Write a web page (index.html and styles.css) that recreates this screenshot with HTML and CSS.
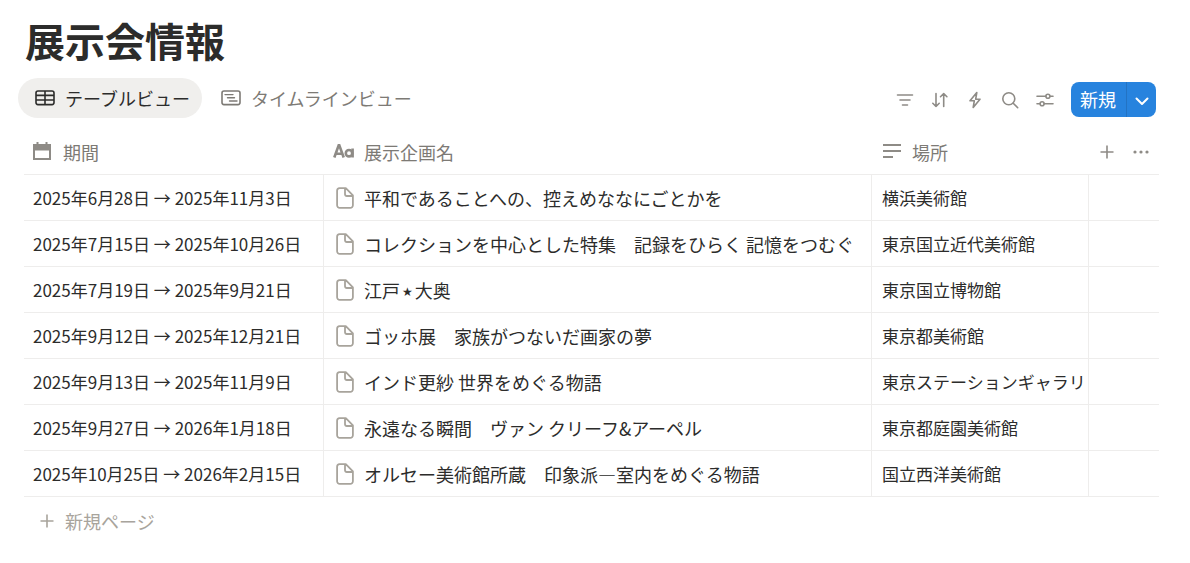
FILE: index.html
```html
<!DOCTYPE html>
<html lang="ja">
<head>
<meta charset="utf-8">
<meta name="viewport" content="width=device-width, initial-scale=1">
<title>展示会情報</title>
<link rel="stylesheet" href="styles.css">
</head>
<body>
<svg width="0" height="0" class="sprite" aria-hidden="true">
  <symbol id="page" viewBox="0 0 18 22">
    <path d="M3.6 1.1h6.2L16.9 8.4v9.8a2.6 2.6 0 0 1-2.6 2.6H3.7a2.6 2.6 0 0 1-2.6-2.6V3.7a2.6 2.6 0 0 1 2.5-2.6zM9 1.2v6.1a1.7 1.7 0 0 0 1.700 1.700h6" fill="none" stroke="currentColor" stroke-width="1.8" stroke-linejoin="round"/>
  </symbol>
  <symbol id="plus" viewBox="0 0 14 14">
    <path d="M7 .5v13M.5 7h13" fill="none" stroke="currentColor" stroke-width="1.6"/>
  </symbol>
</svg>
<main class="page">
  <h1 class="title">展示会情報</h1>

  <div class="bar">
    <nav class="tabs">
      <button class="tab tab-active" type="button">
        <svg width="20" height="16" viewBox="0 0 20 16" fill="none" stroke="currentColor" stroke-width="1.6"><rect x="1" y="1" width="18" height="13.6" rx="2"/><path d="M1 5.4h18M1 10h18M10 1v13.6"/></svg>
        <span>テーブルビュー</span>
      </button>
      <button class="tab" type="button">
        <svg width="20" height="16" viewBox="0 0 20 16" fill="none" stroke="currentColor" stroke-width="1.6"><rect x="1" y="1" width="18" height="13.6" rx="2"/><path d="M4 4.6h8M6.500 7.800h7M8.500 11h7.500" stroke-width="1.4" stroke-linecap="round"/></svg>
        <span>タイムラインビュー</span>
      </button>
    </nav>
    <div class="tools">
      <button class="tool" type="button" aria-label="フィルター"><svg width="18" height="18" viewBox="0 0 18 18"><path d="M1.500 4h15M4 9h10M6.500 14h5"/></svg></button>
      <button class="tool" type="button" aria-label="並べ替え"><svg width="18" height="18" viewBox="0 0 18 18"><path d="M5 2.500v13M1.800 12.300 5 15.500l3.200-3.200M12.700 15.500v-13M9.500 5.700l3.200-3.200 3.200 3.200"/></svg></button>
      <button class="tool" type="button" aria-label="オートメーション"><svg width="18" height="18" viewBox="0 0 18 18"><path d="M10.800 1.500 4 9.800h4.300L7.200 16.500 14 8.200H9.700z"/></svg></button>
      <button class="tool" type="button" aria-label="検索"><svg width="18" height="18" viewBox="0 0 18 18"><circle cx="7.800" cy="7.800" r="6"/><path d="m12.200 12.200 4.500 4.500"/></svg></button>
      <button class="tool" type="button" aria-label="設定"><svg width="18" height="18" viewBox="0 0 18 18"><path d="M1 5.200h8.800M14 5.200h3M1 12.800h3M8.200 12.800H17"/><circle cx="11.900" cy="5.200" r="2"/><circle cx="6.100" cy="12.800" r="2"/></svg></button>
      <div class="new">
        <button class="new-main" type="button">新規</button>
        <button class="new-more" type="button" aria-label="その他"><svg width="14" height="9" viewBox="0 0 14 9" fill="none" stroke="currentColor" stroke-width="2" stroke-linecap="round" stroke-linejoin="round"><path d="m1.500 1.500 5.500 5.500 5.500-5.500"/></svg></button>
      </div>
    </div>
  </div>

  <table class="table">
    <thead>
      <tr>
        <th class="col-date" scope="col"><span class="head"><svg width="20" height="18" viewBox="0 0 20 18"><path fill="currentColor" fill-rule="evenodd" d="M3.500 0h2v2h7V0h2v2H18v16H0V2h3.500zM2 8.500v7.500h14V8.500z"/></svg>期間</span></th>
        <th class="col-name" scope="col"><span class="head"><svg width="21" height="16" viewBox="0 0 21 16" fill="none" stroke="currentColor" stroke-width="2.600"><path d="M1.300 14.500 5.700 2.200h.6l4.400 12.300M2.900 10.800h6.200"/><circle cx="16" cy="10.200" r="3.200"/><path d="M19.600 5.500v9"/></svg>展示企画名</span></th>
        <th class="col-place" scope="col"><span class="head"><svg width="20" height="16" viewBox="0 0 20 16"><path d="M1 2h18M1 8h18M1 14h10" fill="none" stroke="currentColor" stroke-width="2"/></svg>場所</span></th>
        <th class="col-more"><span class="actions"><button type="button" aria-label="プロパティを追加"><svg width="14" height="14"><use href="#plus"/></svg></button><button type="button" aria-label="プロパティ"><svg width="16" height="4" viewBox="0 0 16 4" fill="currentColor"><circle cx="2" cy="2" r="1.600"/><circle cx="8" cy="2" r="1.600"/><circle cx="14" cy="2" r="1.600"/></svg></button></span></th>
      </tr>
    </thead>
    <tbody>
      <tr><td class="date">2025年6月28日 → 2025年11月3日</td><td class="name"><span class="item"><svg width="18" height="22"><use href="#page"/></svg>平和であることへの、控えめななにごとかを</span></td><td class="place">横浜美術館</td><td></td></tr>
      <tr><td class="date">2025年7月15日 → 2025年10月26日</td><td class="name"><span class="item"><svg width="18" height="22"><use href="#page"/></svg>コレクションを中心とした特集　記録をひらく 記憶をつむぐ</span></td><td class="place">東京国立近代美術館</td><td></td></tr>
      <tr><td class="date">2025年7月19日 → 2025年9月21日</td><td class="name"><span class="item"><svg width="18" height="22"><use href="#page"/></svg><span>江戸<span class="star">★</span>大奥</span></span></td><td class="place">東京国立博物館</td><td></td></tr>
      <tr><td class="date">2025年9月12日 → 2025年12月21日</td><td class="name"><span class="item"><svg width="18" height="22"><use href="#page"/></svg>ゴッホ展　家族がつないだ画家の夢</span></td><td class="place">東京都美術館</td><td></td></tr>
      <tr><td class="date">2025年9月13日 → 2025年11月9日</td><td class="name"><span class="item"><svg width="18" height="22"><use href="#page"/></svg>インド更紗 世界をめぐる物語</span></td><td class="place">東京ステーションギャラリ</td><td></td></tr>
      <tr><td class="date">2025年9月27日 → 2026年1月18日</td><td class="name"><span class="item"><svg width="18" height="22"><use href="#page"/></svg>永遠なる瞬間　ヴァン クリーフ&amp;アーペル</span></td><td class="place">東京都庭園美術館</td><td></td></tr>
      <tr><td class="date">2025年10月25日 → 2026年2月15日</td><td class="name"><span class="item"><svg width="18" height="22"><use href="#page"/></svg>オルセー美術館所蔵　印象派—室内をめぐる物語</span></td><td class="place">国立西洋美術館</td><td></td></tr>
    </tbody>
  </table>
  <button class="add" type="button"><svg width="14" height="14"><use href="#plus"/></svg>新規ページ</button>
</main>
</body>
</html>
```
FILE: styles.css
```css
* { box-sizing: border-box; }

body {
  margin: 0;
  background: #fff;
  color: #2c2c2b;
  font-family: "Noto Sans CJK JP", sans-serif;
  font-size: 18px;
  line-height: 24px;
}

button {
  margin: 0;
  padding: 0;
  border: 0;
  background: none;
  color: inherit;
  font: inherit;
  cursor: pointer;
}

svg { display: block; flex: none; }
.sprite { position: absolute; }

.page { padding: 14px 31px 24px 24px; }

.title {
  margin: 0;
  padding-left: 1px;
  font-size: 40px;
  line-height: 52px;
  font-weight: 700;
}

.bar {
  display: flex;
  align-items: center;
  justify-content: space-between;
  margin-top: 12px;
}

.tabs { display: flex; gap: 2px; margin-left: -6px; }

.tab {
  display: flex;
  align-items: center;
  gap: 10px;
  height: 40px;
  padding: 0 12px 0 17px;
  border-radius: 20px;
  color: #7d7a75;
  white-space: nowrap;
}

.tab-active { background: #f0efed; color: #2c2c2b; }

.tools {
  display: flex;
  align-items: center;
  gap: 17px;
  padding: 2px 3px 0 0;
}

.tool { padding-top: 2px; color: #8e8b86; }

.tool svg {
  fill: none;
  stroke: currentColor;
  stroke-width: 1.6;
  stroke-linecap: round;
  stroke-linejoin: round;
}

.new {
  display: flex;
  height: 35px;
  overflow: hidden;
  border-radius: 8px;
  background: #2783de;
  color: #fff;
}

.new-main { padding: 0 10px 0 9px; }

.new-more {
  display: grid;
  place-items: center;
  width: 30px;
  padding-top: 4px;
  border-left: 1px solid #2373c3;
}

.table {
  width: 100%;
  margin-top: 12px;
  table-layout: fixed;
  border-collapse: separate;
  border-spacing: 0;
}

.col-date { width: 300px; }
.col-place { width: 217px; }
.col-more { width: 70px; }

.table th {
  height: 45px;
  padding: 0 9px;
  border-bottom: 1px solid #eeedec;
  color: #7d7a75;
  font-weight: 400;
  text-align: left;
}

.head { display: flex; align-items: center; gap: 10px; }
.head svg { margin-bottom: 2px; color: #8e8b86; }

.table .col-place { padding-left: 10px; }

.actions {
  display: flex;
  align-items: center;
  gap: 19px;
  padding-left: 2px;
  color: #8e8b86;
}

.table td {
  height: 46px;
  padding: 1px 9px 0;
  border-bottom: 1px solid #eeedec;
  border-right: 1px solid #eeedec;
  white-space: nowrap;
}

.table td:last-child { border-right: 0; }

.table .date { font-size: 17px; }
.table .place { padding: 1px 0 0 10px; font-size: 17px; }
.table .name { padding: 0 9px 0 12px; }

.star {
  margin: 0 2px;
  font-family: "DejaVu Sans", sans-serif;
  font-size: 12px;
  line-height: 12px;
  vertical-align: 2px;
}

.item { display: flex; align-items: center; gap: 10px; }
.item svg { color: #a8a49c; }

.add {
  display: flex;
  align-items: center;
  gap: 11px;
  height: 48px;
  padding: 0 16px;
  color: #a8a49c;
}
```
